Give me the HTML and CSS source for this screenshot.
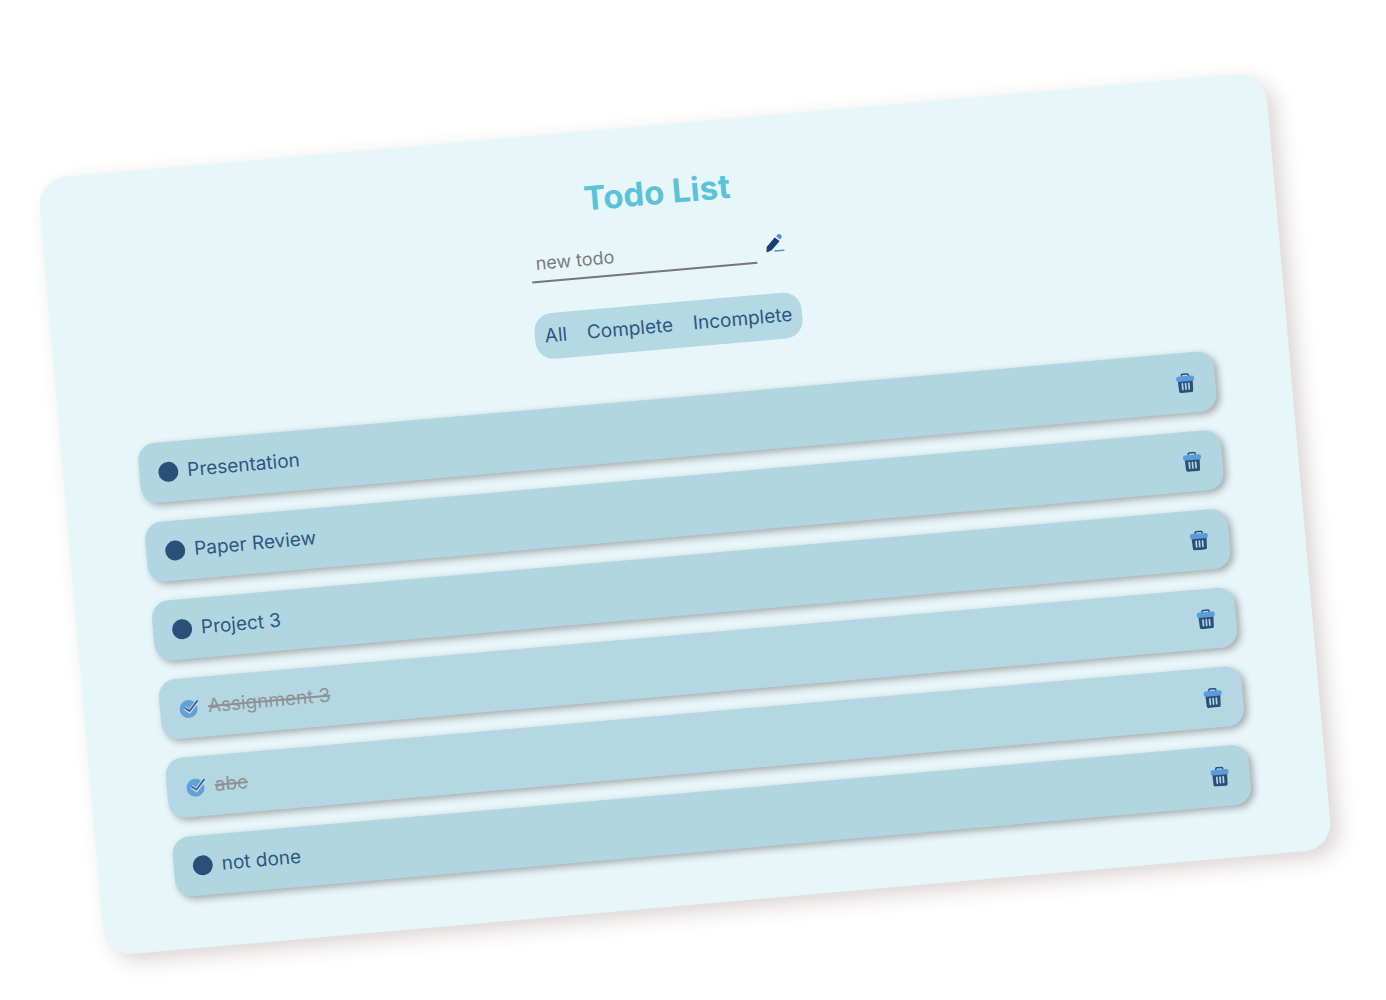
FILE: index.html
```html
<!DOCTYPE html>
<html lang="en">
<head>
<meta charset="utf-8">
<title>Todo List</title>
<link rel="stylesheet" href="styles.css">
</head>
<body>
<svg class="defs" aria-hidden="true">
  <symbol id="trash" viewBox="0 0 20 20">
    <path d="M6.500 3.500V2.400Q6.500 1.200 7.700 1.200h4.600Q13.500 1.200 13.500 2.400V3.500" fill="none" stroke="#2a5078" stroke-width="1.500"/>
    <path d="M2.500 7.500h15L17 18.200Q16.900 19.800 15.300 19.800H4.700Q3.100 19.800 3 18.200Z" fill="#2a5078"/>
    <rect x="1" y="3.200" width="18" height="5.200" rx="2" fill="#5b9cdb"/>
    <path d="M6.800 10.800v5.600M10 10.800v5.600M13.200 10.800v5.600" stroke="#b2d6e1" stroke-width="1.700" stroke-linecap="round"/>
  </symbol>
  <symbol id="check" viewBox="0 0 20 20">
    <circle cx="9.500" cy="11" r="9" fill="#62a0d9"/>
    <path d="M5.500 9.500L10.200 13.400 18.800 4" fill="none" stroke="#b5d7e4" stroke-width="4"/>
    <path d="M6 9.800L10.300 13 18.800 3.600" fill="none" stroke="#2f577f" stroke-width="1.500" stroke-linecap="round"/>
  </symbol>
</svg>
<main class="card">
  <h1 class="title">Todo List</h1>
  <form class="new-todo">
    <input class="new-todo-input" type="text" placeholder="new todo" aria-label="new todo">
    <button class="icon-button" type="button" aria-label="Add todo">
      <svg class="icon" viewBox="0 0 20 20">
        <path d="M9.500 18.800h9" stroke="#4a93dc" stroke-width="1.500" stroke-linecap="round"/>
        <path d="M10.500 6l3.800 3.300L5.800 17.600 1.600 19 2 14.600Z" fill="#173f70" stroke="#173f70" stroke-width="1" stroke-linejoin="round"/>
        <path d="M12 4.200l1.400-1.400Q14.800 1.600 16.200 2.600l.9 1Q18.200 5 17 6.400L15.600 7.800Z" fill="#4a93dc"/>
      </svg>
    </button>
  </form>
  <div class="filters">
    <button class="filter" type="button">All</button>
    <button class="filter" type="button">Complete</button>
    <button class="filter" type="button">Incomplete</button>
  </div>
  <ul class="todos">
    <li class="todo">
      <label class="todo-label"><span class="mark"><input class="tick" type="checkbox"></span><span>Presentation</span></label>
      <button class="icon-button" type="button" aria-label="Delete Presentation"><svg class="icon"><use href="#trash"/></svg></button>
    </li>
    <li class="todo">
      <label class="todo-label"><span class="mark"><input class="tick" type="checkbox"></span><span>Paper Review</span></label>
      <button class="icon-button" type="button" aria-label="Delete Paper Review"><svg class="icon"><use href="#trash"/></svg></button>
    </li>
    <li class="todo">
      <label class="todo-label"><span class="mark"><input class="tick" type="checkbox"></span><span>Project 3</span></label>
      <button class="icon-button" type="button" aria-label="Delete Project 3"><svg class="icon"><use href="#trash"/></svg></button>
    </li>
    <li class="todo done">
      <label class="todo-label"><span class="mark"><input class="tick" type="checkbox" checked><svg class="icon"><use href="#check"/></svg></span><span class="text">Assignment 3</span></label>
      <button class="icon-button" type="button" aria-label="Delete Assignment 3"><svg class="icon"><use href="#trash"/></svg></button>
    </li>
    <li class="todo done">
      <label class="todo-label"><span class="mark"><input class="tick" type="checkbox" checked><svg class="icon"><use href="#check"/></svg></span><span class="text">abc</span></label>
      <button class="icon-button" type="button" aria-label="Delete abc"><svg class="icon"><use href="#trash"/></svg></button>
    </li>
    <li class="todo">
      <label class="todo-label"><span class="mark"><input class="tick" type="checkbox"></span><span>not done</span></label>
      <button class="icon-button" type="button" aria-label="Delete not done"><svg class="icon"><use href="#trash"/></svg></button>
    </li>
  </ul>
</main>
</body>
</html>
```
FILE: styles.css
```css
* {
  box-sizing: border-box;
}

body {
  margin: 0;
  padding: 124px 85px 80px 69px;
  background: #fff;
  color: #2d5681;
  font: 19px/24px Inter, "Liberation Sans", sans-serif;
}

button,
input {
  margin: 0;
  padding: 0;
  border: 0;
  background: none;
  color: inherit;
  font: inherit;
}

button {
  cursor: pointer;
}

.defs {
  display: none;
}

.card {
  display: flex;
  flex-direction: column;
  align-items: center;
  padding: 47px 76px 52px;
  border-radius: 28px;
  background: #e6f6f9;
  box-shadow: 8px 8px 20px rgba(80, 50, 50, 0.2);
  transform: rotate(-5deg);
}

.title {
  margin: 0 0 20px;
  color: #5cc2d8;
  font-size: 33px;
  line-height: 40px;
  font-weight: 700;
}

.new-todo {
  display: flex;
  align-items: center;
  margin-bottom: 31px;
}

.new-todo-input {
  width: 226px;
  height: 40px;
  padding: 2px 5px 0;
  border-bottom: 2px solid #767676;
  outline: none;
  font-size: 18px;
}

.new-todo-input::placeholder {
  color: #7b7b7b;
  opacity: 1;
}

.icon-button {
  display: flex;
  justify-content: center;
  width: 38px;
}

.icon {
  width: 20px;
  height: 20px;
}

.filters {
  display: flex;
  height: 46px;
  margin-bottom: 49px;
  border-radius: 18px;
  background: #b4d8e4;
}

.filter {
  padding: 0 10px;
}

.todos {
  display: flex;
  flex-direction: column;
  gap: 19px;
  width: 100%;
  margin: 0;
  padding: 0;
  list-style: none;
}

.todo {
  display: flex;
  align-items: center;
  justify-content: space-between;
  height: 60px;
  padding: 0 11px 0 19px;
  border-radius: 17px;
  background: #b2d6e1;
  box-shadow: 3px 3px 7px rgba(50, 35, 35, 0.36);
}

.todo-label {
  display: flex;
  align-items: center;
  gap: 9px;
}

.mark {
  display: grid;
  width: 20px;
  height: 20px;
}

.mark > * {
  grid-area: 1 / 1;
}

.tick {
  appearance: none;
  border-radius: 50%;
  background: #2a5078;
}

.tick:checked {
  background: none;
}

.done {
  background: #b5d7e4;
}

.done .text {
  color: #8f9294;
  text-decoration: line-through;
  text-decoration-thickness: 2px;
}
```
